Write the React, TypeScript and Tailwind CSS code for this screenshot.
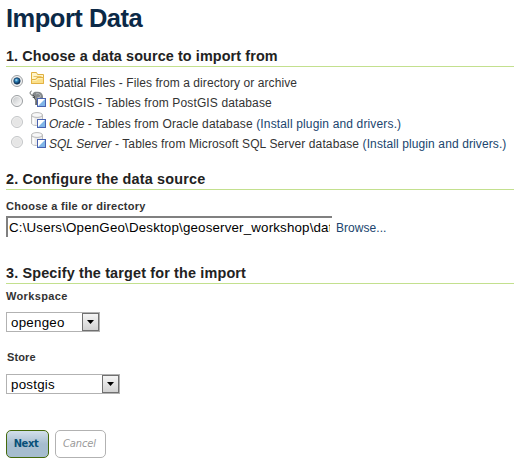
import type { ReactNode } from 'react';

function Heading({ children, className = '' }: { children: ReactNode; className?: string }) {
  return (
    <h2 className={`ml-[6px] h-[20px] border-b border-[#c3e08e] text-[14.4px] leading-[18px] font-bold whitespace-nowrap text-[#222] ${className}`}>
      {children}
    </h2>
  );
}

function Radio({ checked = false, disabled = false }: { checked?: boolean; disabled?: boolean }) {
  return (
    <svg width="14" height="14" viewBox="0 0 14 14" className="mt-[5px] shrink-0">
      <defs>
        <linearGradient id="radioFace" x1="0" y1="0" x2="1" y2="1">
          <stop offset="0" stopColor="#c5c8ca" />
          <stop offset="1" stopColor="#fafafa" />
        </linearGradient>
        <radialGradient id="radioDot" cx=".4" cy=".35" r=".6">
          <stop offset="0" stopColor="#b9edff" />
          <stop offset=".4" stopColor="#2f86bd" />
          <stop offset="1" stopColor="#0a2c50" />
        </radialGradient>
      </defs>
      <circle cx="7" cy="7" r="5.5" fill={disabled ? '#eeeeee' : '#f4f4f4'} stroke={disabled ? '#c4c6c8' : '#9a9ea1'} />
      <circle cx="7" cy="7" r="4" fill={disabled ? '#e6e6e6' : 'url(#radioFace)'} />
      {checked && <circle cx="7" cy="7" r="3.2" fill="url(#radioDot)" stroke="#123a60" strokeWidth=".7" />}
    </svg>
  );
}

function FolderIcon() {
  return (
    <svg width="16" height="16" viewBox="0 0 16 16">
      <path d="M1.500 12.500V1.500h5l1 2h6v9z" fill="#fff4c8" stroke="#dfb040" />
      <path d="M3.500 5.500h8" stroke="#e8c468" />
      <path d="M1.500 12.500V8.500h4l1.500-2h6.500v6z" fill="#fbe08a" stroke="#e3b245" />
      <path d="M2.500 9.500h4l1.500-2h4.500" fill="none" stroke="#fff0b5" />
    </svg>
  );
}

function StoreBadge() {
  return (
    <g>
      <rect x="7.500" y="7.500" width="8" height="8" fill="#fff" stroke="#4a62b0" />
      <path d="M15 8v7H8z" fill="#80b5e8" />
    </g>
  );
}

function PostgisIcon() {
  return (
    <svg width="17" height="16" viewBox="0 0 17 16" className="overflow-visible">
      <path d="M2.500 3C3.500 1 5 .500 7 .800 10 .500 12.500 2 13 5v3H8v6H5.500V9.500L4.500 7 3 5.500z" fill="#85898b" />
      <path d="M4 4.500L1.500 4C-.500 3 0 .500 1.500 0M4.500 5v2.500L6 9.500v4.500M2.500 6l2 1" fill="none" stroke="#4b4f51" />
      <path d="M6 3c1.500-1 3.500-.500 4.500 1.500L10 6.500H7.500" fill="none" stroke="#b9bcbd" />
      <StoreBadge />
    </svg>
  );
}

function DatabaseIcon() {
  return (
    <svg width="17" height="16" viewBox="0 0 17 16">
      <path d="M1.500 3v8c0 1.500 2 2.500 5 2.500s6-1 6-2.500V3" fill="#ececec" stroke="#bcbcbc" />
      <path d="M3.500 5.500v7" stroke="#fff" strokeWidth="2" />
      <ellipse cx="7" cy="3" rx="5.500" ry="2.400" fill="#f8f8f8" stroke="#b9b9b9" />
      <StoreBadge />
    </svg>
  );
}

function Source({ checked, disabled, icon, children, className }: {
  checked?: boolean; disabled?: boolean; icon: ReactNode; children: ReactNode; className: string;
}) {
  return (
    <label className={`flex items-start pl-[10px] ${className}`}>
      <Radio checked={checked} disabled={disabled} />
      <span className="ml-[6px] w-[19px] shrink-0 pt-[2px]">{icon}</span>
      <span className="pt-[6px] text-[12px] leading-[16px] whitespace-nowrap text-[#333]">{children}</span>
    </label>
  );
}

function Select({ value, className }: { value: string; className: string }) {
  return (
    <div className={`ml-[6px] flex h-[20px] justify-between border border-[#b2b2b2] bg-white pl-[4px] ${className}`}>
      <span className="text-[13.333px] leading-[20px] tracking-[0.25px] text-black">{value}</span>
      <span className="flex h-[18px] w-[17px] items-center justify-center border border-[#707070] bg-linear-to-b from-[#f5f5f5] to-[#d2d2d2]">
        <svg width="7" height="4" viewBox="0 0 7 4"><path d="M0 0h7L3.500 4z" fill="#000" /></svg>
      </span>
    </div>
  );
}

export default function App() {
  return (
    <main className="h-[466px] w-[514px] overflow-hidden bg-white font-['Liberation_Sans',Arial,sans-serif]">
      <h1 className="h-[47px] pt-[4px] pl-[6px] text-[25.5px] leading-[29px] font-bold tracking-[-0.5px] text-[#0b2947]">Import Data</h1>
      <Heading className="tracking-[0.1px]">1. Choose a data source to import from</Heading>
      <div className="h-[103px] pt-[2px]">
        <Source checked icon={<FolderIcon />} className="h-[20px] tracking-[0.08px]">Spatial Files - Files from a directory or archive</Source>
        <Source icon={<PostgisIcon />} className="h-[21px] tracking-[0.13px]">PostGIS - Tables from PostGIS database</Source>
        <Source disabled icon={<DatabaseIcon />} className="h-[20px] tracking-[0.15px]"><em className="tracking-normal">Oracle</em> - Tables from Oracle database <a className="text-[#20456e]">(Install plugin and drivers.)</a></Source>
        <Source disabled icon={<DatabaseIcon />} className="h-[20px] tracking-[0.11px]"><em className="tracking-normal">SQL Server</em> - Tables from Microsoft SQL Server database <a className="text-[#20456e]">(Install plugin and drivers.)</a></Source>
      </div>
      <Heading className="tracking-[0.18px]">2. Configure the data source</Heading>
      <div className="h-[74px] pl-[6px]">
        <div className="pt-[9px] text-[11px] leading-[14px] font-bold tracking-[0.27px] text-[#333]">Choose a file or directory</div>
        <div className="mt-[3px] flex">
          <div className="h-[21px] w-[326px] overflow-hidden border-t-2 border-l-2 border-[#808080] pr-[2px]">
            <div className="overflow-hidden pl-px text-[13.333px] leading-[20px] tracking-[0.17px] whitespace-nowrap text-black">C:\Users\OpenGeo\Desktop\geoserver_workshop\data</div>
          </div>
          <a className="pt-[4px] pl-[4px] text-[12px] leading-[16px] tracking-[0.05px] text-[#20456e]">Browse...</a>
        </div>
      </div>
      <Heading className="tracking-[0.16px]">3. Specify the target for the import</Heading>
      <div className="h-[28px] pt-[5px] pl-[6px] text-[11px] leading-[14px] font-bold tracking-[0.35px] text-[#333]">Workspace</div>
      <Select value="opengeo" className="w-[94px]" />
      <div className="h-[42px] pt-[18px] pl-[7px] text-[11px] leading-[14px] font-bold tracking-[0.1px] text-[#333]">Store</div>
      <Select value="postgis" className="w-[114px]" />
      <div className="mt-[36px] flex gap-[6px] pl-[6px] font-['DejaVu_Sans_Condensed','DejaVu_Sans',sans-serif] text-[11px]">
        <button className="h-[28px] w-[43px] rounded-[5px] border border-[#456a0c] bg-linear-to-b from-[#d2dfeb] via-[#a6bdcf] to-[#a6bdcf] pr-[3px] font-bold tracking-[-0.4px] text-[#075078]">Next</button>
        <button className="h-[28px] w-[51px] rounded-[5px] border border-[#b2b2b2] bg-white pr-[2px] tracking-[-0.1px] text-[#999] italic">Cancel</button>
      </div>
    </main>
  );
}
